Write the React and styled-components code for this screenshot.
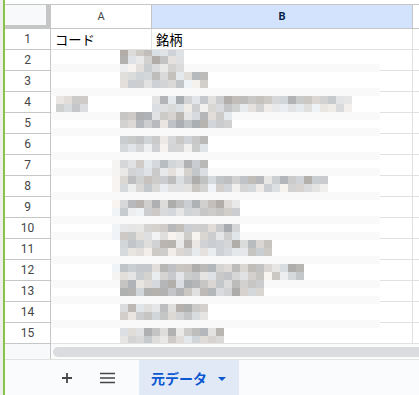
import React from 'react'
import styled, { createGlobalStyle } from 'styled-components'

const GlobalStyle = createGlobalStyle`
    html, body {
        margin: 0;
        padding: 0;
        background: #fff;
    }
    * {
        box-sizing: border-box;
    }
`

const Page = styled.div`
    display: flex;
    width: 419px;
    height: 395px;
    overflow: hidden;
    font-family: Roboto, "Liberation Sans", "Noto Sans CJK JP", sans-serif;
`
const Edge = styled.div`
    width: 3px;
    background: #eeeeee;
`
const Frame = styled.div`
    position: relative;
    flex: 1;
    display: flex;
    flex-direction: column;
    border-left: 2px solid #8bc34a;
    padding-top: 4px;
    min-width: 0;
`
const Sheet = styled.div`
    display: grid;
    grid-template-columns: 46px 101px 261px 1fr;
    grid-template-rows: 24px repeat(15, 21px);
    border-top: 1px solid #c4c7c5;
`
const Corner = styled.div`
    background: #f8f9fa;
    border-right: 5px solid #c4c7c5;
    border-bottom: 4px solid #c4c7c5;
`
const ColHeader = styled.div`
    display: flex;
    align-items: center;
    justify-content: center;
    font-size: 11px;
    color: ${p => (p.$selected ? '#041e49' : '#444746')};
    font-weight: ${p => (p.$selected ? 700 : 400)};
    background: ${p => (p.$selected ? '#d3e3fd' : '#fff')};
    border-right: 1px solid #c4c7c5;
    border-bottom: 1px solid #c4c7c5;
`
const HeaderFill = styled.div`
    border-bottom: 1px solid #c4c7c5;
`
const RowHead = styled.div`
    display: flex;
    align-items: center;
    justify-content: center;
    font-size: 12px;
    color: #444746;
    border-right: 1px solid #c4c7c5;
    border-bottom: 1px solid #c4c7c5;
`
const Cell = styled.div`
    display: flex;
    align-items: center;
    padding: 1px 3px 0 4px;
    font-family: "Liberation Sans", "Noto Sans CJK JP", sans-serif;
    font-size: 13.3px;
    color: #000;
    border-right: ${p => (p.$last ? 'none' : '1px solid #e1e1e1')};
    border-bottom: 1px solid #e1e1e1;
    white-space: nowrap;
`
const ScrollRow = styled.div`
    display: flex;
    height: 16px;
    border-bottom: 1px solid #e1e3e1;
`
const ScrollCorner = styled.div`
    width: 46px;
    background: #f8f9fa;
    border-right: 1px solid #c4c7c5;
`
const Track = styled.div`
    flex: 1;
    padding: 3px 0 0 2px;
    background: #fbfbfb;
`
const Thumb = styled.div`
    height: 10px;
    margin-right: -20px;
    border-radius: 5px;
    background: #dadce0;
`
const TabBar = styled.div`
    flex: 1;
    display: flex;
    align-items: stretch;
    background: #f9fbfd;
    padding-left: 50px;
`
const IconButton = styled.div`
    width: 24px;
    display: flex;
    align-items: center;
    justify-content: center;
    color: #444746;
    margin-right: ${p => p.$gap || 0}px;
`
const SheetTab = styled.div`
    width: 100px;
    display: flex;
    align-items: center;
    padding-left: 12px;
    gap: 11px;
    background: #e1e9f7;
`
const TabLabel = styled.span`
    font-family: "Noto Sans CJK JP", sans-serif;
    font-size: 14px;
    font-weight: 700;
    color: #0b57d0;
`
const Caret = styled.span`
    width: 0;
    height: 0;
    border-left: 4px solid transparent;
    border-right: 4px solid transparent;
    border-top: 4px solid #0b57d0;
    margin-top: 2px;
`
const Mosaic = styled.svg`
    position: absolute;
    left: 47px;
    top: 50px;
    display: block;
`

// blurred cell contents: x ranges per sheet row
const blurred = {
    2: [[120, 184]],
    3: [[120, 208]],
    4: [[56, 88], [152, 352]],
    5: [[120, 236]],
    6: [[120, 208]],
    7: [[112, 208]],
    8: [[112, 328]],
    9: [[112, 240]],
    10: [[112, 240]],
    11: [[120, 276]],
    12: [[112, 304]],
    13: [[120, 264]],
    14: [[120, 208]],
    15: [[120, 224]],
}

let seed = 91
const rand = () => {
    seed = (seed * 16807) % 2147483647
    return seed / 2147483647
}

const buildBlocks = () => {
    const xs = [52]
    for (let x = 56; x <= 376; x += 8) xs.push(x)
    xs.push(380)
    const ys = [50]
    for (let y = 56; y <= 336; y += 8) ys.push(y)
    ys.push(343)
    const blocks = []
    for (let j = 0; j < ys.length - 1; j++) {
        const y0 = ys[j], y1 = ys[j + 1]
        const yc = (y0 + y1) / 2
        const r = Math.floor((yc - 29) / 21) + 1
        const p = yc - (29 + 21 * (r - 1))
        let line = false
        for (let k = 1; k < 17; k++) {
            const g = 49 + 21 * (k - 1)
            if (g >= y0 && g < y1) line = true
        }
        for (let i = 0; i < xs.length - 1; i++) {
            const x0 = xs[i], x1 = xs[i + 1]
            const xc = (x0 + x1) / 2
            const ranges = blurred[r] || []
            const inText = p > 2 && p < 19 && ranges.some(([a, b]) => xc > a && xc < b)
            let fill = null
            if (inText) {
                const edge = ranges.some(([a]) => a === 112 && xc < 120)
                const low = p > 11
                const base = edge ? 244 : (low ? 196 : 172) + rand() * (low ? 48 : 62)
                const v = Math.min(246, base)
                const t = (rand() - 0.5) * 10
                fill = `rgb(${Math.round(v + t)},${Math.round(v)},${Math.round(v - t)})`
            } else if (line) {
                fill = '#f9f9f9'
            }
            if (fill) blocks.push({ x: x0 - 52, y: y0 - 50, w: x1 - x0, h: y1 - y0, fill })
        }
    }
    return blocks
}

const blocks = buildBlocks()

const rows = Array.from({ length: 15 }, (_, i) => i + 1)

const App = () => {
    return (
        <Page>
            <GlobalStyle />
            <Edge />
            <Frame>
                <Sheet>
                    <Corner />
                    <ColHeader>A</ColHeader>
                    <ColHeader $selected>B</ColHeader>
                    <HeaderFill />
                    {rows.map(n => (
                        <React.Fragment key={n}>
                            <RowHead>{n}</RowHead>
                            <Cell>{n === 1 ? 'コード' : ''}</Cell>
                            <Cell>{n === 1 ? '銘柄' : ''}</Cell>
                            <Cell $last />
                        </React.Fragment>
                    ))}
                </Sheet>
                <ScrollRow>
                    <ScrollCorner />
                    <Track>
                        <Thumb />
                    </Track>
                </ScrollRow>
                <TabBar>
                    <IconButton $gap={16}>
                        <svg width="12" height="12" viewBox="0 0 12 12">
                            <path d="M6 1v10M1 6h10" stroke="currentColor" strokeWidth="1.8" fill="none" />
                        </svg>
                    </IconButton>
                    <IconButton $gap={20}>
                        <svg width="15" height="12" viewBox="0 0 15 12">
                            <path d="M0 1.5h15M0 6h15M0 10.5h15" stroke="currentColor" strokeWidth="1.6" fill="none" />
                        </svg>
                    </IconButton>
                    <SheetTab>
                        <TabLabel>元データ</TabLabel>
                        <Caret />
                    </SheetTab>
                </TabBar>
                <Mosaic width="328" height="293" viewBox="0 0 328 293" shapeRendering="crispEdges">
                    <rect x="0" y="0" width="328" height="293" fill="#fff" />
                    {blocks.map((b, i) => (
                        <rect key={i} x={b.x} y={b.y} width={b.w} height={b.h} fill={b.fill} />
                    ))}
                </Mosaic>
            </Frame>
        </Page>
    )
}

export default App
